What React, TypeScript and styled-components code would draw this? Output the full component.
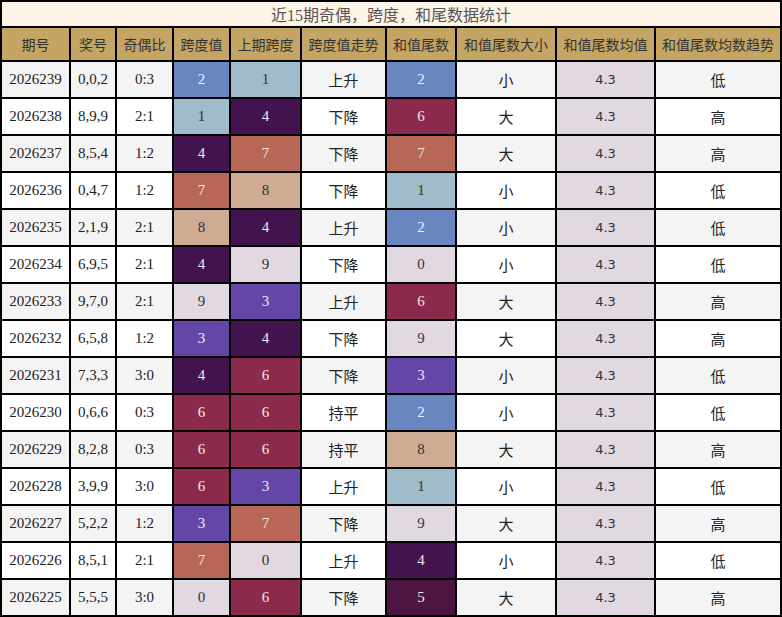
import React from "react";
import styled, { createGlobalStyle } from "styled-components";

const Global = createGlobalStyle`
  html, body { margin: 0; padding: 0; background: #ffffff; }
  body { font-family: "Liberation Serif", "Noto Sans CJK SC", serif; }
`;

const COLS = "67px 44px 55px 55px 69px 83px 68px 98px 97px 124px";

const Sheet = styled.div`
  display: grid;
  grid-template-columns: ${COLS};
  grid-template-rows: 24px 32px repeat(15, 35px);
  gap: 2px;
  padding: 2px;
  width: 782px;
  box-sizing: border-box;
  background: #000000;
`;

const Title = styled.div`
  grid-column: 1 / -1;
  background: #fdf3e6;
  color: #555555;
  font-family: "Liberation Serif", "Noto Sans CJK SC", serif;
  font-size: 16px;
  display: flex;
  align-items: center;
  justify-content: center;
`;

const HeadCell = styled.div`
  background: #c4a564;
  color: #333333;
  font-family: "Noto Sans CJK SC", sans-serif;
  font-weight: 400;
  font-size: 14px;
  display: flex;
  align-items: center;
  justify-content: center;
  white-space: nowrap;
`;

const Cell = styled.div<{ $odd: boolean }>`
  background: ${(p) => (p.$odd ? "#f4f4f4" : "#ffffff")};
  color: #222222;
  font-family: "Liberation Serif", "Noto Sans CJK SC", serif;
  font-size: 15px;
  display: flex;
  align-items: center;
  justify-content: center;
  white-space: nowrap;
`;

const PALETTE: Record<number, { bg: string; fg: string }> = {
  0: { bg: "#e2d8e2", fg: "#333333" },
  1: { bg: "#a0bbc9", fg: "#333333" },
  2: { bg: "#6886c0", fg: "#eef2fa" },
  3: { bg: "#6446a6", fg: "#eeeaf6" },
  4: { bg: "#43134f", fg: "#f0eaf2" },
  5: { bg: "#4b153f", fg: "#f0eaf0" },
  6: { bg: "#8c2a4d", fg: "#f3e6ea" },
  7: { bg: "#b86757", fg: "#f6e8e4" },
  8: { bg: "#d0ab93", fg: "#333333" },
  9: { bg: "#e2d8e2", fg: "#333333" },
};

const DigitCell = styled.div<{ $d: number }>`
  background: ${(p) => PALETTE[p.$d].bg};
  color: ${(p) => PALETTE[p.$d].fg};
  font-family: "Liberation Serif", serif;
  font-size: 15px;
  display: flex;
  align-items: center;
  justify-content: center;
`;

const AvgCell = styled.div`
  background: #e2d8e2;
  color: #333333;
  font-family: "DejaVu Sans", sans-serif;
  font-size: 13px;
  display: flex;
  align-items: center;
  justify-content: center;
`;

const heads = [
  "期号",
  "奖号",
  "奇偶比",
  "跨度值",
  "上期跨度",
  "跨度值走势",
  "和值尾数",
  "和值尾数大小",
  "和值尾数均值",
  "和值尾数均数趋势",
];

type Row = [string, string, string, number, number, string, number, string, string];

const rows: Row[] = [
  ["2026239", "0,0,2", "0:3", 2, 1, "上升", 2, "小", "低"],
  ["2026238", "8,9,9", "2:1", 1, 4, "下降", 6, "大", "高"],
  ["2026237", "8,5,4", "1:2", 4, 7, "下降", 7, "大", "高"],
  ["2026236", "0,4,7", "1:2", 7, 8, "下降", 1, "小", "低"],
  ["2026235", "2,1,9", "2:1", 8, 4, "上升", 2, "小", "低"],
  ["2026234", "6,9,5", "2:1", 4, 9, "下降", 0, "小", "低"],
  ["2026233", "9,7,0", "2:1", 9, 3, "上升", 6, "大", "高"],
  ["2026232", "6,5,8", "1:2", 3, 4, "下降", 9, "大", "高"],
  ["2026231", "7,3,3", "3:0", 4, 6, "下降", 3, "小", "低"],
  ["2026230", "0,6,6", "0:3", 6, 6, "持平", 2, "小", "低"],
  ["2026229", "8,2,8", "0:3", 6, 6, "持平", 8, "大", "高"],
  ["2026228", "3,9,9", "3:0", 6, 3, "上升", 1, "小", "低"],
  ["2026227", "5,2,2", "1:2", 3, 7, "下降", 9, "大", "高"],
  ["2026226", "8,5,1", "2:1", 7, 0, "上升", 4, "小", "低"],
  ["2026225", "5,5,5", "3:0", 0, 6, "下降", 5, "大", "高"],
];

export default function App() {
  return (
    <>
      <Global />
      <Sheet>
        <Title>近15期奇偶，跨度，和尾数据统计</Title>
        {heads.map((h) => (
          <HeadCell key={h}>{h}</HeadCell>
        ))}
        {rows.map((r, i) => {
          const odd = i % 2 === 0;
          return (
            <React.Fragment key={r[0]}>
              <Cell $odd={odd}>{r[0]}</Cell>
              <Cell $odd={odd}>{r[1]}</Cell>
              <Cell $odd={odd}>{r[2]}</Cell>
              <DigitCell $d={r[3]}>{r[3]}</DigitCell>
              <DigitCell $d={r[4]}>{r[4]}</DigitCell>
              <Cell $odd={odd}>{r[5]}</Cell>
              <DigitCell $d={r[6]}>{r[6]}</DigitCell>
              <Cell $odd={odd}>{r[7]}</Cell>
              <AvgCell>4.3</AvgCell>
              <Cell $odd={odd}>{r[8]}</Cell>
            </React.Fragment>
          );
        })}
      </Sheet>
    </>
  );
}
